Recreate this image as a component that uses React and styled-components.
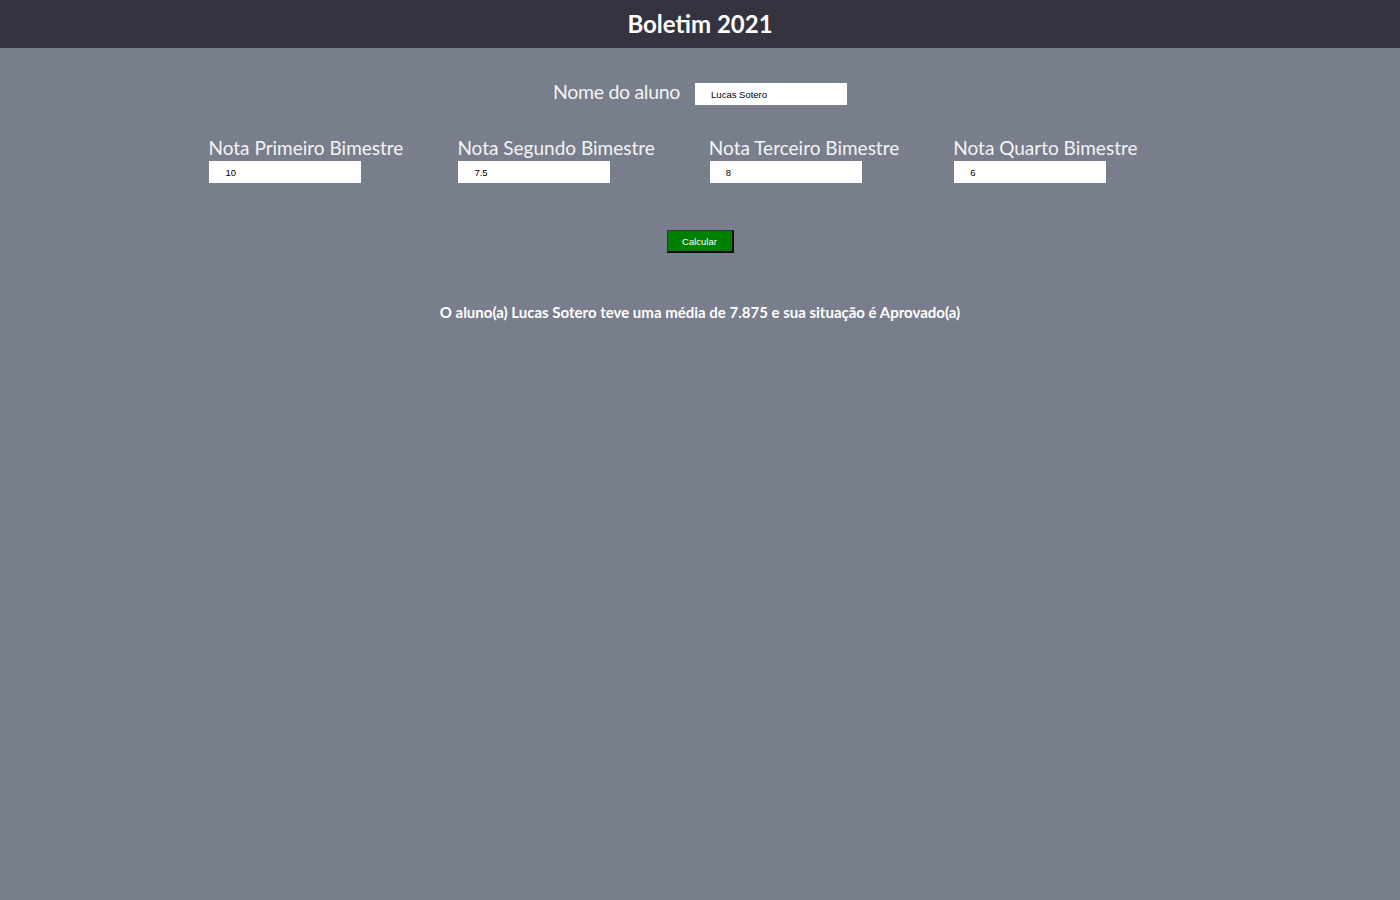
import React from "react";
import styled, { createGlobalStyle } from "styled-components";

const Global = createGlobalStyle`
  html, body { margin: 0; padding: 0; }
  body {
    background: #787e8b;
    font-family: Lato, "Open Sans", sans-serif;
    color: #ffffff;
  }
`;

const Header = styled.header`
  height: 48px;
  background: #35333f;
  display: flex;
  align-items: center;
  justify-content: center;
`;

const Title = styled.h1`
  margin: 0 0 2px;
  font-size: 24px;
  font-weight: 700;
  color: #fff;
`;

const Main = styled.main`
  display: flex;
  flex-direction: column;
  align-items: center;
`;

const NameRow = styled.div`
  margin-top: 32px;
  display: flex;
  align-items: center;
  gap: 15px;
`;

const BigLabel = styled.label`
  font-size: 19.5px;
  letter-spacing: -0.3px;
  color: #f4f4f4;
  line-height: 24px;
  margin-bottom: 4px;
`;

const Field = styled.input`
  box-sizing: border-box;
  width: 152px;
  height: 22px;
  border: none;
  outline: none;
  background: #fff;
  padding: 0 0 0 16px;
  font-family: "Liberation Sans", Arial, sans-serif;
  font-size: 9.5px;
  color: #000;
  margin: ${(p) => p.$margin || "0"};
`;

const Grades = styled.div`
  margin-top: 28px;
  display: flex;
  justify-content: center;
`;

const Column = styled.div`
  display: flex;
  flex-direction: column;
  align-items: flex-start;
  margin-right: 54px;
`;

const GradeLabel = styled.label`
  font-size: 19px;
  color: #f4f4f4;
  line-height: 24px;
  margin-bottom: 1px;
`;

const Button = styled.button`
  margin-top: 47px;
  width: 67px;
  height: 23px;
  background: #008000;
  color: #fff;
  font-family: "Liberation Sans", Arial, sans-serif;
  font-size: 9.5px;
  border-style: solid;
  border-color: #2b3a2b #0a0a0a #0a0a0a #2b3a2b;
  border-width: 1px 2px 2px 1px;
  padding: 0;
  cursor: pointer;
`;

const Result = styled.p`
  margin: 50px 0 0;
  font-size: 15px;
  font-weight: 700;
  color: #fff;
`;

const grades = [
  { label: "Nota Primeiro Bimestre", value: "10" },
  { label: "Nota Segundo Bimestre", value: "7.5" },
  { label: "Nota Terceiro Bimestre", value: "8" },
  { label: "Nota Quarto Bimestre", value: "6" },
];

export default function App() {
  return (
    <>
      <Global />
      <Header>
        <Title>Boletim 2021</Title>
      </Header>
      <Main>
        <NameRow>
          <BigLabel>Nome do aluno</BigLabel>
          <Field defaultValue="Lucas Sotero" />
        </NameRow>
        <Grades>
          {grades.map((g) => (
            <Column key={g.label}>
              <GradeLabel>{g.label}</GradeLabel>
              <Field defaultValue={g.value} $margin="0 0 0 1px" />
            </Column>
          ))}
        </Grades>
        <Button>Calcular</Button>
        <Result>
          O aluno(a) Lucas Sotero teve uma média de 7.875 e sua situação é Aprovado(a)
        </Result>
      </Main>
    </>
  );
}
